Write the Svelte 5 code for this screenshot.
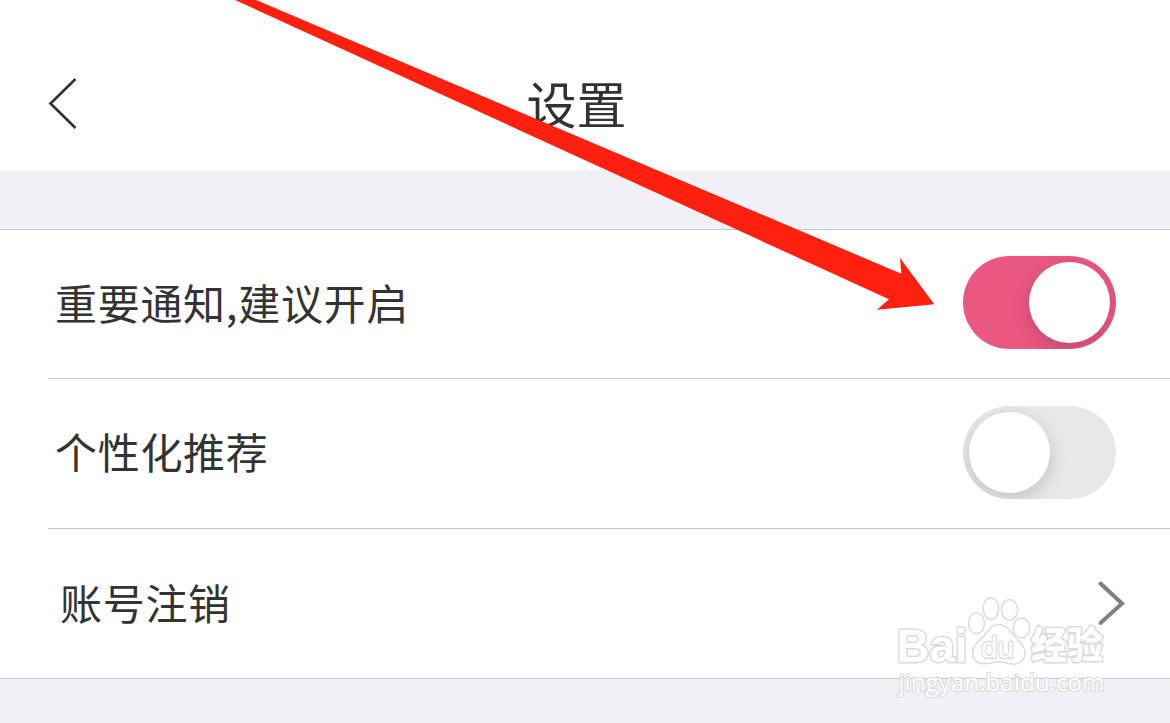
<script lang="ts">
	type Setting = {
		label: string;
		kind: 'switch' | 'link';
		on?: boolean;
	};

	let settings: Setting[] = $state([
		{ label: '重要通知,建议开启', kind: 'switch', on: true },
		{ label: '个性化推荐', kind: 'switch', on: false },
		{ label: '账号注销', kind: 'link' }
	]);
</script>

<div class="page">
	<header class="header">
		<button class="back" aria-label="返回">
			<svg width="30" height="54" viewBox="0 0 30 54">
				<path d="M27.5 2 2.5 26.5 27.5 51" fill="none" stroke="#333" stroke-width="2.7" />
			</svg>
		</button>
		<h1>设置</h1>
	</header>

	<ul class="list">
		{#each settings as item}
			<li class="row" class:link={item.kind === 'link'}>
				<span class="label">{item.label}</span>
				{#if item.kind === 'switch'}
					<button
						class="switch"
						class:on={item.on}
						role="switch"
						aria-checked={item.on}
						aria-label={item.label}
						onclick={() => (item.on = !item.on)}
					>
						<span class="knob"></span>
					</button>
				{:else}
					<svg class="chevron" width="30" height="48" viewBox="0 0 30 48">
						<path
							d="M3.5 4.5 25 24.5 3.5 44"
							fill="none"
							stroke="#808080"
							stroke-width="4"
							stroke-linecap="round"
						/>
					</svg>
				{/if}
			</li>
		{/each}
	</ul>

	<svg class="pointer" width="1170" height="723" viewBox="0 0 1170 723">
		<path
			d="M235 0H256L901.3 273.7 900 258 934.3 304.3 877 309.7 889 299.3Z"
			fill="#ff200f"
		/>
	</svg>

	<svg class="watermark" width="220" height="110" viewBox="0 0 220 110">
		<g class="outline">
			<text class="latin" x="6.5" y="72" textLength="71" lengthAdjust="spacingAndGlyphs">Bai</text>
			<ellipse cx="86.5" cy="33.3" rx="8" ry="10.4" />
			<ellipse cx="101" cy="18.6" rx="7.8" ry="10.8" />
			<ellipse cx="119.5" cy="19.8" rx="8.2" ry="10.2" />
			<ellipse cx="131.5" cy="38" rx="8.2" ry="10" />
			<path
				d="M109 34.5C100 34.5 98 42 93 47C87 52.5 82.5 56 82.5 63C82.5 70 88 74 95 73.8C101 73.5 104 71.8 109 71.8C114 71.8 117 74 124 74C131 74 135 69 135 63C135 56 130 52 125 47C120 41 117 34.5 109 34.5Z"
			/>
			<text class="du" x="91" y="67.5" textLength="33" lengthAdjust="spacingAndGlyphs">du</text>
			<text class="cjk" x="141" y="69" textLength="72" lengthAdjust="spacingAndGlyphs">经验</text>
		</g>
		<text class="url" x="8.5" y="100.5" textLength="206" lengthAdjust="spacingAndGlyphs"
			>jingyan.baidu.com</text
		>
	</svg>
</div>

<style>
	:global(body) {
		margin: 0;
		overflow: hidden;
	}
	.page {
		position: relative;
		width: 1170px;
		height: 723px;
		overflow: hidden;
		background: #f0f0f6;
		color: #333;
		font-family: 'Noto Sans CJK SC', sans-serif;
	}
	.header {
		display: grid;
		grid-template-columns: 130px 1fr 147px;
		align-items: center;
		box-sizing: border-box;
		height: 170px;
		padding-top: 37px;
		background: #fff;
	}
	h1 {
		margin: 0;
		padding-bottom: 4px;
		font-size: 50px;
		font-weight: 400;
		line-height: 72px;
		text-align: center;
	}
	button {
		padding: 0;
		border: 0;
		background: none;
	}
	.back {
		display: flex;
		padding-left: 48px;
	}
	.list {
		margin: 59px 0 0;
		padding: 0 0 0 48px;
		list-style: none;
		background: #fff;
		border-top: 1px solid #c6c6c8;
		border-bottom: 1px solid #c6c6c8;
	}
	.row {
		display: flex;
		align-items: center;
		justify-content: space-between;
		box-sizing: border-box;
		height: 150px;
		padding: 0 54px 3px 7px;
		border-bottom: 1px solid #c6c6c8;
	}
	.row:first-child {
		height: 149px;
	}
	.row.link {
		height: 149px;
		padding: 0 43px 2px 12px;
		border-bottom: 0;
	}
	.label {
		padding-bottom: 2px;
		font-size: 42px;
		letter-spacing: 0.7px;
		line-height: 62px;
		white-space: nowrap;
	}
	.switch {
		display: flex;
		align-items: center;
		box-sizing: border-box;
		width: 153px;
		height: 93px;
		padding: 6px;
		border-radius: 47px;
		background: #e8e8e8;
		overflow: hidden;
	}
	.switch.on {
		justify-content: flex-end;
		background: #ea5882;
	}
	.knob {
		width: 81px;
		height: 81px;
		border-radius: 50%;
		background: #fff;
		box-shadow: 0 6px 18px rgba(0, 0, 0, 0.17);
	}
	.pointer {
		position: absolute;
		top: 0;
		left: 0;
		pointer-events: none;
	}
	.watermark {
		position: absolute;
		left: 890px;
		top: 590px;
		pointer-events: none;
	}
	.outline {
		fill: #fff;
		stroke: #dadada;
		stroke-width: 1.4;
	}
	.outline text {
		stroke-width: 3;
		stroke-linejoin: round;
		paint-order: stroke;
	}
	.latin {
		font: bold 47px 'Liberation Sans', sans-serif;
	}
	.outline .du {
		font: 30px 'Liberation Sans', sans-serif;
		stroke-width: 2.4;
	}
	.cjk {
		font: 900 37px 'Noto Sans CJK SC', sans-serif;
	}
	.url {
		font: 23px 'Open Sans', sans-serif;
		fill: #fff;
		stroke: #d9d9dd;
		stroke-width: 2;
		paint-order: stroke;
	}
</style>
